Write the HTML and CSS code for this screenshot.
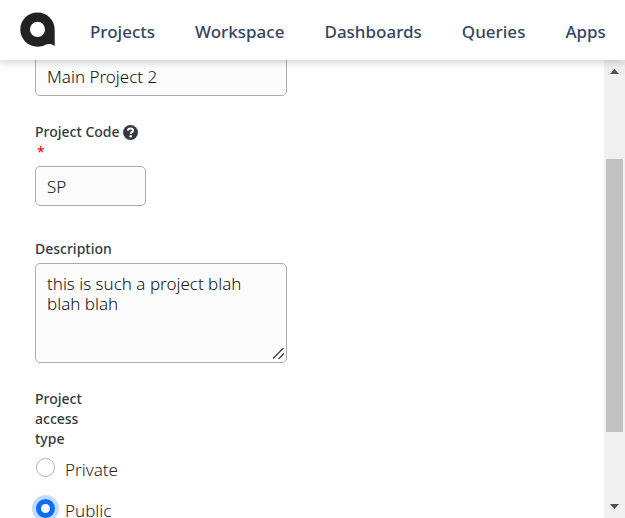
FILE: index.html
```html
<!DOCTYPE html>
<html lang="en">
<head>
<meta charset="utf-8">
<title>Project settings</title>
<link rel="stylesheet" href="styles.css">
</head>
<body>
<header class="topbar">
  <a class="logo" href="#" aria-label="Home">
    <svg width="36" height="36" viewBox="0 0 36 36" aria-hidden="true">
      <path fill="#222" fill-rule="evenodd" d="M17.5 0.5C27 0.5 34.7 8 34.7 17.5V34C31.5 31.3 28.500 31.500 25.500 32.800C23 34.200 20.500 34.700 17.500 34.700C8 34.700 0.300 27 0.300 17.500S8 0.500 17.500 0.500ZM17.500 9.800A7.600 7.600 0 1 0 17.500 25A7.600 7.600 0 1 0 17.500 9.800Z"/>
    </svg>
  </a>
  <nav class="nav">
    <a href="#">Projects</a>
    <a href="#">Workspace</a>
    <a href="#">Dashboards</a>
    <a href="#">Queries</a>
    <a href="#">Apps</a>
  </nav>
</header>
<div class="page">
  <main class="content">
    <form class="form">
      <input class="control" type="text" aria-label="Project name" value="Main Project 2">
      <div class="field">
        <label for="code">Project Code
          <svg class="help" width="15" height="15" viewBox="0 0 14 14" aria-hidden="true">
            <circle cx="7" cy="7" r="7" fill="#343a40"/>
            <path d="M4.500 5.300C4.800 3.700 5.800 3.200 7 3.200C8.400 3.200 9.400 4 9.400 5.200C9.400 6.700 7.200 6.700 7.200 8.300" fill="none" stroke="#fff" stroke-width="1.900"/>
            <circle cx="7.200" cy="10.500" r="1.200" fill="#fff"/>
          </svg>
          <span class="required">*</span>
        </label>
        <input class="control short" id="code" type="text" value="SP">
      </div>
      <div class="field description">
        <label for="description">Description</label>
        <textarea class="control" id="description">this is such a project blah blah blah</textarea>
      </div>
      <fieldset class="access">
        <legend>Project access type</legend>
        <label class="option"><input type="radio" name="access"><span>Private</span></label>
        <label class="option"><input type="radio" name="access" checked><span>Public</span></label>
      </fieldset>
    </form>
  </main>
  <div class="scrollbar" aria-hidden="true">
    <svg class="arrow" width="9" height="5" viewBox="0 0 9 5"><path d="M0 5L4.500 0L9 5Z" fill="#505050"/></svg>
    <div class="track"><div class="thumb"></div></div>
    <svg class="arrow" width="9" height="5" viewBox="0 0 9 5"><path d="M0 0L4.500 5L9 0Z" fill="#505050"/></svg>
  </div>
</div>
</body>
</html>
```
FILE: styles.css
```css
* {
  box-sizing: border-box;
}

body {
  display: flex;
  flex-direction: column;
  height: 100vh;
  margin: 0;
  overflow: hidden;
  background: #fff;
  color: #212529;
  font-family: "Noto Sans", "Open Sans", sans-serif;
  font-size: 17px;
}

.topbar {
  z-index: 1;
  display: flex;
  flex: none;
  align-items: center;
  gap: 34px;
  height: 60px;
  padding: 0 20px;
  background: #fff;
  box-shadow: 0 2px 8px rgba(0, 0, 0, 0.2);
}

.logo {
  display: flex;
}

.nav {
  display: flex;
  gap: 40px;
  padding-top: 3px;
}

.nav a {
  color: #344563;
  font-weight: 500;
  line-height: 24px;
  text-decoration: none;
}

.page {
  display: flex;
  flex: 1;
  min-height: 0;
}

.content {
  flex: 1;
  overflow: hidden;
  padding: 0 35px;
}

.form {
  max-width: 252px;
  margin-top: -4px;
}

.control {
  display: block;
  width: 100%;
  height: 40px;
  margin: 0;
  padding: 0 11px;
  border: 1px solid #adadad;
  border-radius: 5px;
  background: #fcfcfc;
  color: #101214;
  font-family: inherit;
  font-size: 17px;
  font-weight: 300;
}

.short {
  width: 111px;
}

textarea.control {
  height: 100px;
  padding: 10px 11px;
  line-height: 20px;
}

textarea::-webkit-resizer {
  background: linear-gradient(135deg, transparent 45%, #555 45%, #555 54%, transparent 54%, transparent 69%, #555 69%, #555 78%, transparent 78%) 2px 1px / 11px 11px no-repeat;
}

.field {
  margin-top: 26px;
}

.field label {
  display: block;
  margin-bottom: 4px;
  color: #343a40;
  font-size: 14px;
  font-weight: 500;
  line-height: 20px;
}

.help {
  vertical-align: -3px;
}

.required {
  display: block;
  padding-left: 2px;
  color: #dc0000;
  font-weight: 400;
}

.description {
  margin-top: 33px;
}

.access {
  margin: 26px 0 0;
  padding: 0;
  border: 0;
}

.access legend {
  width: 80px;
  padding: 0 20px 0 0;
  color: #343a40;
  font-size: 14px;
  font-weight: 500;
  line-height: 20px;
}

.option {
  display: flex;
  align-items: center;
  gap: 10px;
  height: 41px;
  font-weight: 300;
}

.option input {
  appearance: none;
  width: 19px;
  height: 19px;
  margin: 0 0 5px 1px;
  border: 1px solid #b4b4b4;
  border-radius: 50%;
  background: #fff;
}

.option input:checked {
  border: 5px solid #0d6efd;
  box-shadow: 0 0 0 4px #c2dbfe;
}

.scrollbar {
  display: flex;
  flex: none;
  flex-direction: column;
  align-items: center;
  width: 21px;
  padding: 9px 0;
  background: #f0f0f0;
}

.arrow {
  flex: none;
}

.track {
  flex: 1;
  width: 17px;
  padding-top: 85px;
}

.thumb {
  height: 79%;
  background: #c1c1c1;
}
```
